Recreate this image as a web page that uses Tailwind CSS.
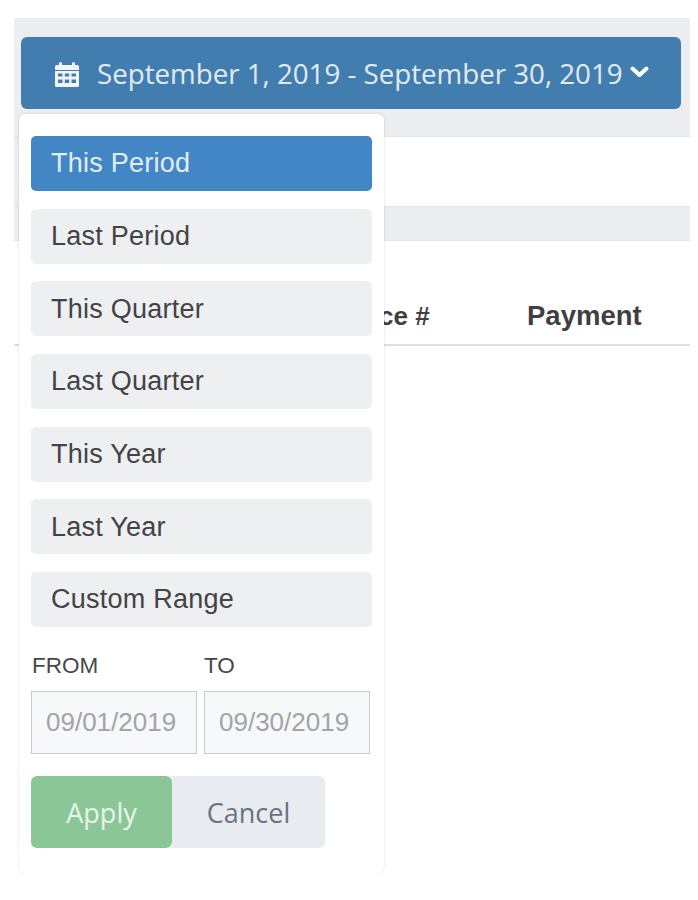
<!DOCTYPE html>
<html lang="en">
  <head>
    <meta charset="UTF-8" />
    <meta name="viewport" content="width=device-width, initial-scale=1.0" />
    <title>Date range</title>
    <script src="https://cdn.jsdelivr.net/npm/@tailwindcss/browser@4"></script>
  </head>
  <body class="bg-white">
    <div class="relative h-[900px] w-[698px] overflow-hidden pt-[18px] pl-[14px] pr-[8px] font-['Liberation_Sans',sans-serif]">
      <!-- top band with the date button -->
      <div class="h-[119px] bg-[#ecedf0] pt-[19px] pl-[7px] pr-[9px] border-b border-[#e3e4e7]">
        <button class="flex h-[72px] w-full items-center rounded-[6px] bg-[#427daf] pl-[33px] pt-[2px] text-white/85 font-['Open_Sans',sans-serif] text-[27.7px]">
          <svg class="w-[26px] h-[30px] mr-[17px] shrink-0" viewBox="0 0 26 30" fill="#f1f5f9">
            <path d="M1 7.500 Q1 6 2.500 6 H5 V4.500 Q5 3 6.500 3 Q8 3 8 4.500 V6 H18 V4.500 Q18 3 19.500 3 Q21 3 21 4.500 V6 H23.500 Q25 6 25 7.500 V11 H1 Z" />
            <path fill-rule="evenodd" d="M1 12 H25 V26.500 Q25 28 23.500 28 H2.500 Q1 28 1 26.500 Z M4 14.500 V17.500 H8.500 V14.500 Z M10.800 14.500 V17.500 H15.200 V14.500 Z M17.500 14.500 V17.500 H22 V14.500 Z M4 20.500 V24 H8.500 V20.500 Z M10.800 20.500 V24 H15.200 V20.500 Z M17.500 20.500 V24 H22 V20.500 Z" />
          </svg>
          <span class="whitespace-nowrap">September 1, 2019 - September 30, 2019</span>
          <svg class="w-[19px] h-[14px] ml-[7px] mb-[4px] shrink-0" viewBox="0 0 19 14" fill="none" stroke="#ffffff" stroke-width="4" stroke-linecap="round" stroke-linejoin="round">
            <path d="M2.500 3.500 L9.500 10 L16.500 3.500" />
          </svg>
        </button>
      </div>

      <div class="h-[69px] bg-white border-l-[5px] border-[#ecedf0]"></div>
      <div class="h-[35px] bg-[#ecedf0] border-y border-[#e3e4e7]"></div>

      <!-- table header -->
      <div class="flex h-[105px] items-end border-b-2 border-[#dedfe2] pb-[8px] pl-[365px] text-[27.5px] font-bold text-[#3f3f41]">
        <span class="w-[148px] whitespace-nowrap text-[26px]">ce #</span>
        <span>Payment</span>
      </div>

      <!-- dropdown menu -->
      <div class="absolute left-[19px] top-[114px] h-[759px] w-[365px] rounded-[6px] bg-white px-[12px] pt-[22px] shadow-[0_0_3px_rgba(0,0,0,0.14)] [clip-path:inset(-5px_-5px_0_-5px)]">
        <div class="flex w-[341px] flex-col gap-[17.700px] text-[27px] tracking-[0.25px] text-[#434345]">
          <div class="flex h-[55px] items-center rounded-[5px] bg-[#4286c6] pl-[20px] text-white/85">This Period</div>
          <div class="flex h-[55px] items-center rounded-[5px] bg-[#eeeff1] pl-[20px]">Last Period</div>
          <div class="flex h-[55px] items-center rounded-[5px] bg-[#eeeff1] pl-[20px]">This Quarter</div>
          <div class="flex h-[55px] items-center rounded-[5px] bg-[#eeeff1] pl-[20px]">Last Quarter</div>
          <div class="flex h-[55px] items-center rounded-[5px] bg-[#eeeff1] pl-[20px]">This Year</div>
          <div class="flex h-[55px] items-center rounded-[5px] bg-[#eeeff1] pl-[20px]">Last Year</div>
          <div class="flex h-[55px] items-center rounded-[5px] bg-[#eeeff1] pl-[20px]">Custom Range</div>
        </div>
        <div class="mt-[24px] flex gap-[7px]">
          <div class="w-[166px]">
            <div class="pl-[1px] text-[22.500px] leading-[30px] text-[#47474a]">FROM</div>
            <div class="mt-[10px] flex h-[63px] items-center border border-[#c9cacf] bg-[#f7f8fa] pl-[14px] text-[26px] text-[#a3a4a8]">09/01/2019</div>
          </div>
          <div class="w-[166px]">
            <div class="text-[22.500px] leading-[30px] text-[#47474a]">TO</div>
            <div class="mt-[10px] flex h-[63px] items-center border border-[#c9cacf] bg-[#f7f8fa] pl-[14px] text-[26px] text-[#a3a4a8]">09/30/2019</div>
          </div>
        </div>
        <div class="mt-[22px] flex font-['Open_Sans',sans-serif] text-[27px]">
          <button class="h-[72px] w-[141px] rounded-[6px] bg-[#8bc796] pt-[2px] text-white/80">Apply</button>
          <button class="h-[72px] w-[153px] rounded-r-[6px] bg-[#e8ebef] pt-[2px] text-[#6b7284]">Cancel</button>
        </div>
      </div>
    </div>
  </body>
</html>
